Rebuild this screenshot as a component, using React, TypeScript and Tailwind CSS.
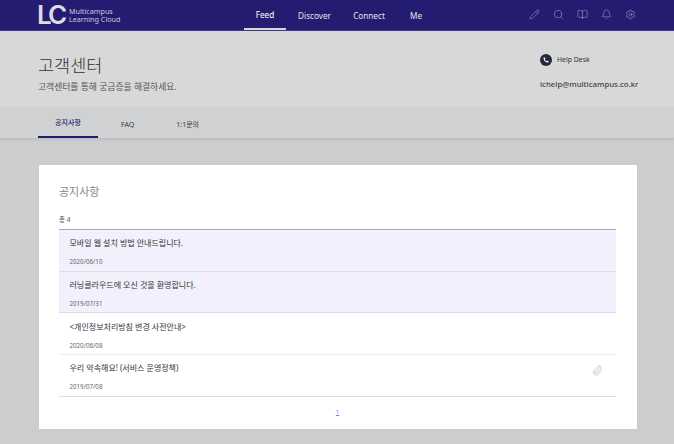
import React from "react";
import { Bell, BookOpen, Paperclip, Pencil, Phone, Search, Settings } from "lucide-react";

interface Notice {
    title: string;
    date: string;
    highlight?: boolean;
    attachment?: boolean;
}

const notices: Notice[] = [
    { title: "모바일 웹 설치 방법 안내드립니다.", date: "2020/06/10", highlight: true },
    { title: "러닝클라우드에 오신 것을 환영합니다.", date: "2019/07/31", highlight: true },
    { title: "<개인정보처리방침 변경 사전안내>", date: "2020/06/08" },
    { title: "우리 약속해요! (서비스 운영정책)", date: "2019/07/08", attachment: true },
];

const navItems = [
    { label: "Feed", className: "w-[42px] border-b-2 border-[#d8d8d8] text-white" },
    { label: "Discover", className: "ml-[12px] w-[33px]" },
    { label: "Connect", className: "ml-[22px] w-[32px]" },
    { label: "Me", className: "ml-[21px] w-[11px]" },
];

const App: React.FC = () => {
    return (
        <div className="h-[444px] w-[674px] overflow-hidden bg-[#cccdce] font-['Noto_Sans','Noto_Sans_CJK_KR',sans-serif]">
            <header className="flex h-[31px] items-stretch border-b border-[#3d3590] bg-[#241c70] pl-[37px]">
                <div className="flex w-[207px] items-center">
                    <span className="w-[32px] text-[26px] leading-none font-semibold tracking-[-3px] text-[#dcdce4] font-['Inter',sans-serif]">LC</span>
                    <span className="text-[7.2px] leading-[8px] text-[#c9c8dc]">
                        Multicampus
                        <br />
                        Learning Cloud
                    </span>
                </div>
                <nav className="flex items-stretch pt-[2px] text-[8.2px] text-[#e4e4ec]">
                    {navItems.map((item) => (
                        <div key={item.label} className={`flex items-center justify-center whitespace-nowrap px-[10px] ${item.className}`}>
                            {item.label}
                        </div>
                    ))}
                </nav>
                <div className="ml-[103px] flex items-center gap-[13px] pb-[1px] text-[#a9a6c6]">
                    <Pencil size={11} strokeWidth={1.2} />
                    <Search size={11} strokeWidth={1.2} />
                    <BookOpen size={11} strokeWidth={1.2} />
                    <Bell size={11} strokeWidth={1.2} />
                    <Settings size={11} strokeWidth={1.2} />
                </div>
            </header>

            <section className="flex h-[76px] justify-between bg-[#d8d8d8] pl-[38px] pr-[37px]">
                <div>
                    <h1 className="mt-[21px] text-[17.5px] leading-[26px] font-light text-[#333333]">고객센터</h1>
                    <p className="mt-[3px] text-[8.8px] leading-[13px] text-[#555555]">고객센터를 통해 궁금증을 해결하세요.</p>
                </div>
                <div className="w-[97px] pt-[23px]">
                    <div className="flex items-center gap-[5px]">
                        <span className="flex h-[12px] w-[12px] items-center justify-center rounded-full bg-[#232a3b]">
                            <Phone size={6} fill="#ffffff" strokeWidth={0} />
                        </span>
                        <span className="text-[6.9px] leading-[12px] text-[#333333]">Help Desk</span>
                    </div>
                    <p className="mt-[12px] whitespace-nowrap text-[7.8px] leading-[12px] font-medium text-[#444444]">lchelp@multicampus.co.kr</p>
                </div>
            </section>

            <div className="flex h-[32px] items-stretch border-b border-[#bfc0c1] bg-[#d0d1d2] pl-[38px] text-[7px] text-[#3c3c3c] shadow-[0_1px_2px_rgba(0,0,0,0.08)]">
                <div className="flex w-[60px] items-center justify-center border-b-2 border-[#241c70] pt-[3px] font-medium text-[#241c70]">공지사항</div>
                <div className="ml-[23px] flex items-center pt-[5px]">FAQ</div>
                <div className="ml-[42px] flex items-center pt-[5px]">1:1문의</div>
            </div>

            <main className="px-[39px] pt-[26px]">
                <div className="h-[264px] w-[598px] bg-white px-[20px] pt-[20px]">
                    <h2 className="text-[11px] leading-[14px] text-[#888888]">공지사항</h2>
                    <p className="mt-[16px] text-[6.5px] leading-[10px] text-[#555555]">총 4</p>
                    <ul className="mt-[4px] w-[557px] border-t border-[#a9a9ad]">
                        {notices.map((notice) => (
                            <li
                                key={notice.title}
                                className={`flex h-[41.7px] items-center justify-between border-b pl-[10.5px] pr-[12px] last:border-[#dcdce4] ${
                                    notice.highlight ? "border-[#dcdce4] bg-[#f1f0fc]" : "border-[#eeeeee] bg-white"
                                }`}
                            >
                                <div className="pt-[4px]">
                                    <p className="text-[8px] leading-[12px] text-[#333333]">{notice.title}</p>
                                    <p className="mt-[8px] text-[6.2px] leading-[10px] text-[#666666]">{notice.date}</p>
                                </div>
                                {notice.attachment && <Paperclip size={11} strokeWidth={1} className="mb-[10px] mr-[1px] text-[#888888]" />}
                            </li>
                        ))}
                    </ul>
                    <div className="mt-[10px] pr-[1px] text-center text-[6px] leading-[10px] text-[#7a72d8] underline">1</div>
                </div>
            </main>
        </div>
    );
};

export default App;
